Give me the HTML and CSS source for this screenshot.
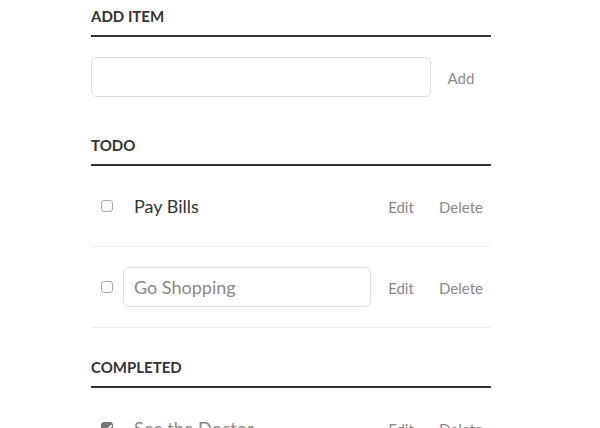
FILE: index.html
```html
<!DOCTYPE html>
<html lang="en">
<head>
<meta charset="utf-8">
<title>Todo App</title>
<link rel="stylesheet" href="styles.css">
</head>
<body>
<div class="container">
  <label class="section-title" for="new-task">Add Item</label>
  <div class="add-row">
    <input id="new-task" class="text-field new-task" type="text">
    <button class="action">Add</button>
  </div>

  <h3 class="section-title section-gap">Todo</h3>
  <ul class="task-list">
    <li class="task">
      <input class="check" type="checkbox">
      <label class="task-label">Pay Bills</label>
      <button class="action">Edit</button>
      <button class="action">Delete</button>
    </li>
    <li class="task">
      <input class="check" type="checkbox">
      <input class="text-field task-edit" type="text" value="Go Shopping">
      <button class="action">Edit</button>
      <button class="action">Delete</button>
    </li>
  </ul>

  <h3 class="section-title">Completed</h3>
  <ul class="task-list">
    <li class="task done">
      <input class="check" type="checkbox" checked>
      <label class="task-label">See the Doctor</label>
      <button class="action">Edit</button>
      <button class="action">Delete</button>
    </li>
  </ul>
</div>
</body>
</html>
```
FILE: styles.css
```css
html, body {
  margin: 0;
  padding: 0;
  background: #fff;
}

body {
  font-family: Lato, "Open Sans", sans-serif;
  color: #333;
}

.container {
  width: 400px;
  margin: 0 0 0 91px;
}

.section-title {
  display: block;
  margin: 0;
  padding: 30px 0 10px;
  color: #333;
  font-weight: 700;
  font-size: 15px;
  line-height: 18px;
  text-transform: uppercase;
  border-bottom: 2px solid #333;
}

label.section-title {
  padding-top: 7px;
  margin-bottom: 20px;
}

.section-gap {
  margin-top: 9px;
}

.add-row {
  display: flex;
  align-items: flex-start;
}

.text-field {
  margin: 0;
  font-size: 18px;
  line-height: 18px;
  height: 18px;
  padding: 10px;
  border: 1px solid #ddd;
  background: #fff;
  border-radius: 6px;
  font-family: Lato, "Open Sans", sans-serif;
  color: #888;
  outline: none;
  box-sizing: content-box;
}

.new-task {
  width: 318px;
}

.action {
  background: none;
  border: 0;
  color: #888;
  font-size: 15px;
  line-height: 18px;
  width: 60px;
  padding: 2px 0 0;
  margin: 0;
  font-family: Lato, "Open Sans", sans-serif;
  cursor: pointer;
  flex: none;
}

.add-row .action {
  margin-top: 10px;
}

.task-list {
  margin: 0;
  padding: 0;
  list-style: none;
}

.task {
  display: flex;
  align-items: center;
  padding: 20px 0;
  border-bottom: 1px solid #eee;
}

.check {
  appearance: none;
  -webkit-appearance: none;
  width: 12px;
  height: 12px;
  margin: 0 10px;
  border: 1px solid #aaa;
  border-radius: 3px;
  background: linear-gradient(#fff, #f6f6f6);
  box-sizing: border-box;
  position: relative;
  flex: none;
}

.check:checked {
  background: #777;
  border-color: #6c6c6c;
}

.check:checked::after {
  content: "";
  position: absolute;
  left: 3px;
  top: 0px;
  width: 3px;
  height: 7px;
  border: solid #fff;
  border-width: 0 2px 2px 0;
  transform: rotate(45deg);
}

.task-label {
  font-size: 18px;
  line-height: 40px;
  width: 237px;
  padding: 0 0 0 11px;
  flex: none;
}

.task-edit {
  width: 226px;
  flex: none;
}

.done .task-label {
  text-decoration: line-through;
  color: #888;
}
```
